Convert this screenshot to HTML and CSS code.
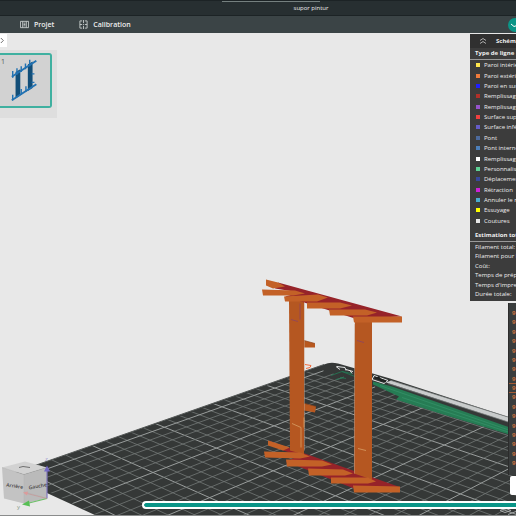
FILE: index.html
```
<!DOCTYPE html>
<html lang="fr">
<head>
  <meta charset="UTF-8" />
  <meta name="viewport" content="width=device-width, initial-scale=1.0"/>
  <title>supor pintur</title>
  <link rel="stylesheet" href="styles.css">
</head>
<body>
  <header class="titlebar"><span>supor pintur</span></header>

  <nav class="tabs">
    <button class="tab-btn">
      <svg class="tab-icon" viewBox="0 0 10 10"><path d="M.5 1.5h9v7h-9zM3 1.5v7M7 1.5v7M4 3.5h2M4 5h2M4 6.500h2"/></svg>
      Projet
    </button>
    <button class="tab-btn">
      <svg class="tab-icon" viewBox="0 0 10 10"><path d="M3.500 1H1v8h2.500M6.500 1H9v8H6.500M5 0v3.500M5 6.500V10M1 5h2.500M6.500 5H9M4.500 5h1"/></svg>
      Calibration
    </button>
    <button class="slice-btn" aria-label="Découper">
      <svg viewBox="0 0 12 12"><path d="M3 5l3 2.500L9 6.500"/></svg>
    </button>
  </nav>

  <main class="viewport">
    <!-- SCENE 3D -->
    <svg class="scene" viewBox="0 33 516 483" preserveAspectRatio="xMidYMid slice">
      <defs>
        <clipPath id="bedClip"><path d="M16 473L326 366L348 368L516 425V516H97L50 493z"/></clipPath>
        <pattern id="layers" width="4" height="2" patternUnits="userSpaceOnUse" patternTransform="rotate(12)">
          <rect width="4" height="2" fill="#b95a22"/>
          <path d="M0 1h4" stroke="#a64e1e" stroke-width=".5"/>
        </pattern>
        <pattern id="beams" width="2" height="4" patternUnits="userSpaceOnUse">
          <rect width="2" height="4" fill="#c9652a"/>
          <path d="M1 0v4" stroke="#b65620" stroke-width=".6"/>
        </pattern>
        <pattern id="redTop" width="2" height="2" patternUnits="userSpaceOnUse">
          <rect width="2" height="2" fill="#a3262b"/>
          <path d="M1 0v2" stroke="#7d1c24" stroke-width=".7"/>
        </pattern>
      </defs>

      <!-- plateau -->
      <path d="M12 474L324 365Q330 362 338 364L390 379L516 420V516H96L48 494z" fill="#353837"/>
      <g id="grid" clip-path="url(#bedClip)"></g>
      <path d="M12 474L324 365" stroke="#555958" stroke-width="1"/>
      <path d="M391 381L516 420V425L386 383z" fill="#c9cccc"/>
      <path d="M391 381L516 420M388 384L516 425" stroke="#777b7b" stroke-width=".7" fill="none"/>
      <path d="M337 367l8 1 1 3M336 367l4 3M346 370l7 2M350 371l2 3M374 376l14 5-4 3-12-4z" stroke="#e4e6e6" stroke-width="1" fill="none"/>
      <path d="M375 378l11 4M378 377l4 5" stroke="#1f2221" stroke-width="2"/>
      <path d="M331 376l11-4 10 2M336 380l8-2M342 372l13 5M340 378l6 1" stroke="#227b55" stroke-width=".8" fill="none"/>
      <path d="M373 382L392 387L516 430V437L440 414L396 400L399 397L373 385z" fill="#267c54"/>
      <path d="M380 386L516 433M402 398L516 435" stroke="#36936a" stroke-width=".7"/>
      <path d="M500 511l6-2 5 2-6 2zM508 515l8-3" stroke="#a5a8a8" fill="none"/>

      <!-- pièce -->
      <path d="M268 441L401 488L354 489L286 462L300 456L283 451z" fill="url(#redTop)"/>
      <path d="M304 341L315 344V348L304 348zM304 404L316 407L315 413L304 411z" fill="#b8581f"/>
      <path d="M304 341l11 3M305 404l11 3" stroke="#8d421a" stroke-width=".7"/>
      <path d="M289 300H304V455L290 451z" fill="url(#layers)"/>
      <path d="M355 320H372V480L354 474z" fill="url(#layers)"/>
      <path d="M278 283L402 317L355 319L285 297L300 293L275 289z" fill="url(#redTop)"/>
      <path d="M266 280L278 283L285 287L273 289L266 286zM262 290L295 291L305 294L293 296H263zM284 297L318 295L328 298L317 302H285zM307 303H340L352 306L340 309H307zM329 310H365L377 313L367 316H330zM353 317H402V323H354z" fill="url(#beams)"/>
      <path d="M268 441L290 448L283 451L268 446zM264 452L300 453L310 457L300 459L265 458zM286 460L322 461L332 465L322 467H287zM308 469L343 470L353 474L345 476H309zM331 478H368L376 482L368 484H331zM353 486L400 487V493H354z" fill="url(#beams)"/>
      <path d="M305 365l6 1-1 2-4 1" fill="none" stroke="#f26a3b"/>
      <path d="M304.500 303V451M354.500 324V474" stroke="#c4a08b" stroke-width=".5"/>
      <path d="M291 320l7 2M300 304v16M357 341l7 2" stroke="#87406b" stroke-width=".7" fill="none"/>
      <path d="M292 424l9 4v20M304 418v10M358 449l8 2" stroke="#d8a066" stroke-width=".8" fill="none"/>

      <!-- cube de vue -->
      <path d="M2 468L25 462L47 468L24 475z" fill="#d2d2d2"/>
      <path d="M2 468L24 475V504L4 499z" fill="#c3c3c3"/>
      <path d="M24 475L47 468V499L24 504z" fill="#bababa"/>
      <path d="M24 475V504M2 468L24 475L47 468M24 492L47 499" stroke="#b0b0b0" stroke-width=".5" fill="none"/>
      <path d="M19 468l4-1 7 1" stroke="#555" stroke-width=".8" fill="none"/>
      <path d="M47 499V470" stroke="#8076bd" stroke-width="1.200"/>
      <path d="M44 472L47 466L50 472z" fill="#7469c4"/>
      <path d="M47 499L27 504" stroke="#6abf65" stroke-width="1.200"/>
      <path d="M29 501L22 505L30 507z" fill="#57bf55"/>
      <path d="M47 499L27 494" stroke="#c98f8f" stroke-width=".6"/>
      <path d="M28 492L23 493L27 496z" fill="#dc9b9b"/>
      <text class="cube-text" x="6" y="487" transform="rotate(8 6 487)">Arrière</text>
      <text class="cube-text" x="29" y="490" transform="rotate(-10 29 490)">Gauche</text>
      <text class="axis-z" x="45" y="461">z</text>
      <text class="axis-y" x="17" y="509">y</text>
    </svg>

    <button class="expand-btn" aria-label="Ouvrir"><svg viewBox="0 0 6 8"><path d="M1 1l3 3-3 3"/></svg></button>

    <!-- PLATEAUX -->
    <div class="plates">
      <button class="plate">
        <span>1</span>
        <svg viewBox="0 0 52 54">
          <path d="M16 18l5-3v28l-5 3zM29 10l5-3v28l-5 3z" fill="#124e78"/>
          <path d="M12 23L38 6M12 48L38 31" stroke="#2272b2" stroke-width="2"/>
          <path d="M13 24v-7M17.500 21v-7M22 18v-6M26.500 15v-6M31 12V5M13 48v-6M22 42v-6M27 39v-6M33 20h3M33 29h3" stroke="#2272b2" stroke-width="1.500"/>
        </svg>
      </button>
    </div>

    <!-- LEGENDE -->
    <aside class="legend">
      <div class="legend-head">
        <svg viewBox="0 0 8 8"><path d="M1 3.500l3-2 3 2M1 6.500l3-2 3 2"/></svg>
        Schéma de couleurs
      </div>
      <h2>Type de ligne</h2>
      <ul class="types">
        <li><i class="dot inner"></i>Paroi intérieure</li>
        <li><i class="dot outer"></i>Paroi extérieure</li>
        <li><i class="dot overhang"></i>Paroi en surplomb</li>
        <li><i class="dot sparse"></i>Remplissage</li>
        <li><i class="dot solid"></i>Remplissage</li>
        <li><i class="dot top"></i>Surface supérieure</li>
        <li><i class="dot bottom"></i>Surface inférieure</li>
        <li><i class="dot bridge"></i>Pont</li>
        <li><i class="dot bridge-in"></i>Pont interne</li>
        <li><i class="dot gap"></i>Remplissage</li>
        <li><i class="dot custom"></i>Personnalisé</li>
        <li><i class="dot travel"></i>Déplacement</li>
        <li><i class="dot retract"></i>Rétraction</li>
        <li><i class="dot unretract"></i>Annuler le retrait</li>
        <li><i class="dot wipe"></i>Essuyage</li>
        <li><i class="dot seam"></i>Coutures</li>
      </ul>
      <h2>Estimation totale</h2>
      <ul class="totals">
        <li>Filament total:</li>
        <li>Filament pour la pièce:</li>
        <li>Coût:</li>
        <li>Temps de préparation:</li>
        <li>Temps d'impression:</li>
        <li>Durée totale:</li>
      </ul>
    </aside>

    <!-- GCODE -->
    <div class="gcode" id="gcode"></div>
    <div class="gcode-foot"></div>

    <input class="moves" type="range" min="0" max="100" value="100" aria-label="Mouvements">
  </main>

  <script>
    // grille du plateau en perspective : deux points de fuite + origine
    const VA = [1497, -45], VB = [-1015, -45], O = [153, 473];

    function project(u, v) {
      const a = u * 0.0099, b = -v * 0.00925;
      const w = 1 + a + b;
      return [(O[0] + a * VA[0] + b * VB[0]) / w, (O[1] + a * VA[1] + b * VB[1]) / w];
    }

    function line(p, q, major) {
      const l = document.createElementNS('http://www.w3.org/2000/svg', 'line');
      l.setAttribute('x1', p[0]);
      l.setAttribute('y1', p[1]);
      l.setAttribute('x2', q[0]);
      l.setAttribute('y2', q[1]);
      l.setAttribute('class', major ? 'major' : 'minor');
      document.getElementById('grid').appendChild(l);
    }

    for (let u = -6; u <= 19; u++) line(project(u, -6), project(u, 20), u % 5 === 0);
    for (let v = -6; v <= 20; v++) line(project(-6, v), project(20, v), v % 5 === 0);

    const gcode = document.getElementById('gcode');
    for (let i = 0; i < 17; i++) {
      const row = document.createElement('span');
      row.textContent = '9';
      if (i === 8) row.className = 'current';
      gcode.appendChild(row);
    }
  </script>
</body>
</html>
```
FILE: styles.css
```
:root {
  --bar: #3b4446;
  --panel: #3c3c3c;
  --accent: #0a9587;
}

* {
  box-sizing: border-box;
}

body {
  margin: 0;
  height: 100vh;
  display: flex;
  flex-direction: column;
  overflow: hidden;
  font-family: 'Open Sans', 'Noto Sans', sans-serif;
  font-size: 6px;
  color: #eee;
  background: #e8e8e8;
}

button {
  border: none;
  padding: 0;
  background: none;
  color: inherit;
  font: inherit;
  cursor: pointer;
}

svg {
  display: block;
}

.titlebar {
  height: 16px;
  padding-left: 106px;
  line-height: 14px;
  text-align: center;
  background: linear-gradient(90deg, transparent 43%, #75807f 43%, #75807f 62%, transparent 62%) 0 0 / 100% 1px no-repeat, #272f31;
  border-bottom: 1px solid #1c2325;
  border-top: 1px solid #1c2325;
}

.tabs {
  height: 17px;
  display: flex;
  align-items: center;
  gap: 25px;
  padding-left: 20px;
  background: var(--bar);
}

.tab-btn {
  display: flex;
  align-items: center;
  gap: 5px;
  font-size: 7px;
  font-weight: 600;
}

.tab-icon {
  width: 9px;
  height: 9px;
  fill: none;
  stroke: #c6cccc;
  stroke-width: 1;
}

.slice-btn {
  width: 8px;
  height: 14px;
  margin-left: auto;
  overflow: hidden;
  border-radius: 7px 0 0 7px;
  background: var(--accent);
}

.slice-btn svg {
  width: 12px;
  height: 12px;
  fill: none;
  stroke: #fff;
}

.viewport {
  position: relative;
  flex: 1;
  min-height: 0;
  overflow: hidden;
  border-bottom: 1px solid #8a8c8c;
}

.scene {
  position: absolute;
  inset: 0;
  width: 100%;
  height: 100%;
}

.minor {
  stroke: #747877;
  stroke-width: .8;
}

.major {
  stroke: #999d9c;
  stroke-width: 1;
}

.cube-text {
  font-size: 5px;
  font-weight: 600;
  fill: #444;
}

.axis-z {
  font-size: 6px;
  fill: #9a94cf;
}

.axis-y {
  font-size: 6px;
  fill: #8a9a8a;
}

.expand-btn {
  position: absolute;
  left: 0;
  top: 1px;
  width: 7px;
  height: 13px;
  background: #fff;
}

.expand-btn svg {
  width: 5px;
  height: 7px;
  fill: none;
  stroke: #555;
}

.plates {
  position: absolute;
  left: 0;
  top: 17px;
  padding: 3px 5px 10px 0;
  background: #dedede;
}

.plate {
  position: relative;
  display: block;
  width: 52px;
  height: 55px;
  background: #d2d2d2;
  border: 2px solid #3fb0a0;
  border-left: none;
  border-radius: 0 3px 3px 0;
}

.plate span {
  position: absolute;
  left: 1px;
  top: 3px;
  font-size: 7px;
  line-height: 8px;
  color: #555;
}

.plate svg {
  width: 50px;
  height: 51px;
}

.legend {
  position: absolute;
  right: 0;
  top: 1px;
  width: 46px;
  padding-bottom: 2px;
  overflow: hidden;
  white-space: nowrap;
  background: var(--panel);
}

.legend-head {
  display: flex;
  align-items: center;
  gap: 9px;
  height: 14px;
  padding-left: 9px;
  font-weight: 700;
  background: #303030;
}

.legend-head svg {
  flex: none;
  width: 8px;
  height: 8px;
  fill: none;
  stroke: #ccc;
  stroke-width: .8;
}

.legend h2 {
  margin: 0;
  padding-left: 5px;
  height: 12px;
  font-size: 6px;
  line-height: 11px;
  font-weight: 700;
  border-bottom: 1px solid #9a9a9a;
}

.legend ul {
  display: grid;
  grid-auto-rows: 1fr;
  align-items: center;
  margin: 0;
  padding: 0;
  list-style: none;
}

.types {
  height: 166px;
}

.types + h2 {
  margin-top: 4px;
}

.totals {
  height: 57px;
}

.types li {
  display: flex;
  align-items: center;
  gap: 4px;
  padding-left: 6px;
}

.totals li {
  padding-left: 5px;
}

.dot {
  flex: none;
  width: 4px;
  height: 4px;
}

.inner { background: #ffe64d; }
.outer { background: #f07b3c; }
.overhang { background: #1f1fff; }
.sparse { background: #b03029; }
.solid { background: #9654cc; }
.top { background: #f04040; }
.bottom { background: #665cc7; }
.bridge { background: #4d6a9c; }
.bridge-in { background: #4d80ba; }
.gap { background: #fff; }
.custom { background: #5ed194; }
.travel { background: #38489b; }
.retract { background: #cd22d6; }
.unretract { background: #49adcf; }
.wipe { background: #ffff00; }
.seam { background: #e6e6e6; }

.gcode {
  position: absolute;
  right: 0;
  top: 270px;
  bottom: 40px;
  width: 8px;
  padding: 6px 0 8px;
  display: flex;
  flex-direction: column;
  justify-content: space-between;
  overflow: hidden;
  font-weight: 700;
  color: #c9703f;
  background: #3a3d3d;
  border-left: 1px solid #2c2c2c;
}

.gcode span {
  padding-left: 3px;
  line-height: 8px;
}

.gcode .current {
  outline: 1px solid #a35a35;
  outline-offset: 0;
}

.gcode-foot {
  position: absolute;
  right: 0;
  bottom: 20px;
  width: 6px;
  height: 19px;
  background: #fff;
  border-radius: 2px 0 0 2px;
}

.moves {
  position: absolute;
  left: 142px;
  right: 0;
  bottom: 6px;
  height: 8px;
  width: calc(100% - 142px);
  margin: 0;
  appearance: none;
  background: var(--accent);
  border: 2px solid #fff;
  border-right: none;
  border-radius: 4px 0 0 4px;
}

.moves::-webkit-slider-thumb {
  appearance: none;
  width: 1px;
  height: 4px;
  background: var(--accent);
}
```
